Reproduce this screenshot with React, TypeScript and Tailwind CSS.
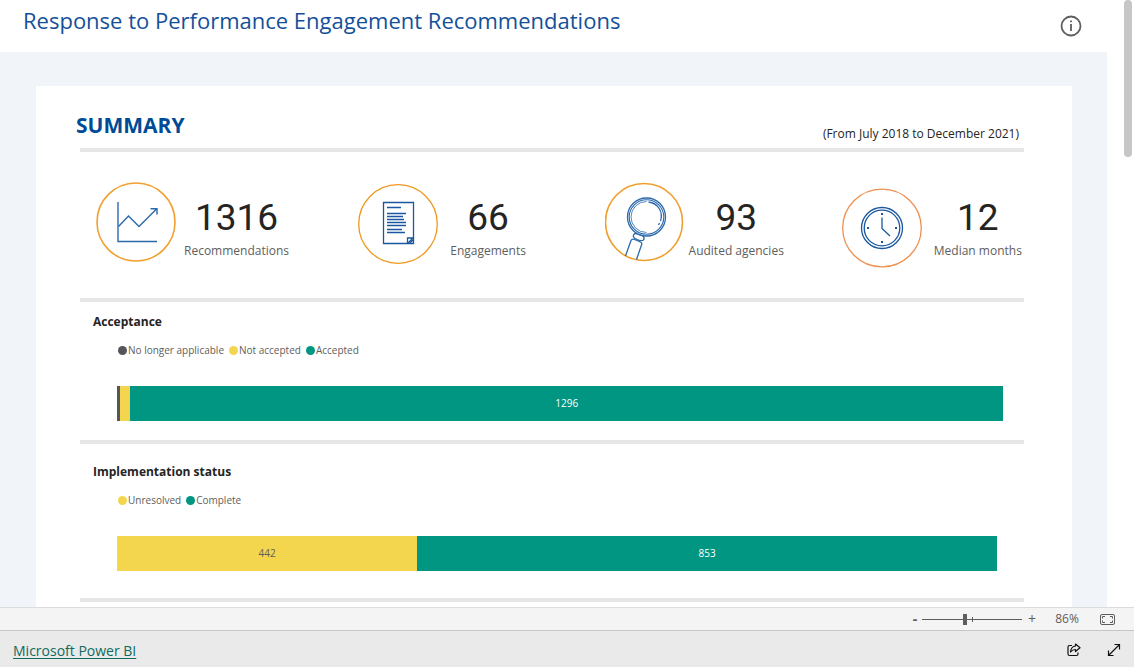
import type { ReactNode } from "react";

interface Segment {
  name: string;
  value: number;
  dot: string;
  fill: string;
  showValue?: boolean;
}

const acceptance: Segment[] = [
  { name: "No longer applicable", value: 4, dot: "bg-[#54565b]", fill: "bg-[#54565b]" },
  { name: "Not accepted", value: 16, dot: "bg-[#f3d64e]", fill: "bg-[#f3d64e]" },
  { name: "Accepted", value: 1296, dot: "bg-[#009681]", fill: "bg-[#009681] text-white", showValue: true },
];

const implementation: Segment[] = [
  { name: "Unresolved", value: 442, dot: "bg-[#f3d64e]", fill: "bg-[#f3d64e] text-[#605e5c]", showValue: true },
  { name: "Complete", value: 853, dot: "bg-[#009681]", fill: "bg-[#009681] text-white", showValue: true },
];

function TrendIcon() {
  return (
    <svg className="size-20 shrink-0" viewBox="0 0 80 80" fill="none" stroke="#2c69ac" strokeWidth="1.4">
      <circle cx="40" cy="40" r="39" stroke="#f0a030" strokeWidth="1.6" />
      <path d="M22 20V59.500H61" />
      <path d="M22.500 44.500L32.500 34L43 44.500L60.500 27M54.500 26.700H61V32.500" />
    </svg>
  );
}

function ReportIcon() {
  return (
    <svg className="mt-0.5 size-20 shrink-0" viewBox="0 0 80 80" fill="none" stroke="#1a57a0" strokeWidth="1.3">
      <circle cx="40" cy="40" r="39.300" stroke="#f0981e" />
      <path d="M25.500 18.500H55.500V59.500H25.500Z" />
      <path d="M49.500 59.500V54H55.500M49.500 59.500L55 54M52 59L55 56" />
      <path d="M29 23.500H43M29 29.500H48M29 32.500H45M29 35.500H46M29 38.500H48M29 41.500H48M29 45.500H44M29 48.500H47" />
    </svg>
  );
}

function MagnifierIcon() {
  return (
    <svg className="size-20 shrink-0" viewBox="0 0 80 80" fill="none" stroke="#2c69ac" strokeWidth="1.3">
      <circle cx="39" cy="40" r="38.500" stroke="#f0a030" strokeWidth="1.6" />
      <circle cx="41.500" cy="35" r="19" />
      <circle cx="41.500" cy="35" r="17.300" strokeWidth="1.1" />
      <path d="M43.500 20C53 21 58.500 30 55.500 39M54.500 41L53.500 43" />
      <path d="M41.500 19.500A15.500 15.500 0 0 0 41.500 50.500" strokeWidth="0.8" />
      <path d="M31 51.500L38 54Q40 56 38.500 58Q36 59.500 32 57.500Q27.500 55.500 28.500 53Q29 51.500 31 51.500Z" />
      <path d="M20.500 74L26 58.500Q27 56.500 29.500 57.500L35.500 60Q37.500 61 36.500 63L31.500 77.500" />
    </svg>
  );
}

function ClockIcon() {
  return (
    <svg className="mt-1.5 size-20 shrink-0" viewBox="0 0 80 80" fill="none" stroke="#1a57a0" strokeWidth="1.3">
      <ellipse cx="40" cy="40" rx="39.300" ry="38.800" stroke="#ee9050" />
      <circle cx="40" cy="40" r="20.500" />
      <circle cx="40" cy="40" r="17.800" />
      <path d="M40 29.500V40.500L48 48" />
      <path d="M39 26H41M39 54H41M25 40H27M53 40H55" strokeWidth="2" />
    </svg>
  );
}

function Stat({ value, label, className, children }: { value: string; label: string; className: string; children: ReactNode }) {
  return (
    <div className={`flex items-start ${className}`}>
      {children}
      <div className="mt-3 flex flex-col items-center">
        <p className="font-[Roboto] text-[37px] leading-12 text-[#252423]">{value}</p>
        <p className="text-[12px] leading-[18px] whitespace-nowrap text-[#605e5c]">{label}</p>
      </div>
    </div>
  );
}

function StackedBar({ title, segments, className }: { title: string; segments: Segment[]; className: string }) {
  return (
    <section className="pt-2.5 pl-[41px]">
      <h3 className="-ml-6 text-[12px] leading-5 font-bold text-[#252423]">{title}</h3>
      <ul className="mt-2.5 ml-px flex gap-[5px] text-[10px] leading-4 text-[#605e5c]">
        {segments.map((s) => (
          <li key={s.name} className="flex items-center gap-px">
            <span className={`size-[9px] rounded-full ${s.dot}`} />
            {s.name}
          </li>
        ))}
      </ul>
      <div className={`mt-7 flex h-[35px] ${className}`}>
        {segments.map((s) => (
          <div
            key={s.name}
            className={`flex items-center justify-center text-[10px] ${s.fill}`}
            style={{ flex: `${s.value} 1 0px` }}
          >
            {s.showValue && s.value}
          </div>
        ))}
      </div>
    </section>
  );
}

function Rule() {
  return <hr className="ml-1 h-1 border-0 bg-[#e6e6e6]" />;
}

function ZoomBar() {
  return (
    <div className="flex h-[23px] shrink-0 items-center justify-end border-t border-[#dcdcdc] bg-[#f4f4f4] pr-[19px] text-[#605e5c]">
      <button aria-label="Zoom out" className="w-[14px] text-[14px] leading-4 font-bold">-</button>
      <div className="relative flex h-4 w-[100px] items-center">
        <input
          type="range"
          aria-label="Zoom"
          min={0}
          max={100}
          defaultValue={43}
          className="h-3 w-full appearance-none bg-[linear-gradient(#605e5c,#605e5c)] bg-[length:100%_1px] bg-center bg-no-repeat [&::-webkit-slider-thumb]:h-[11px] [&::-webkit-slider-thumb]:w-1 [&::-webkit-slider-thumb]:appearance-none [&::-webkit-slider-thumb]:bg-[#605e5c]"
        />
        <span className="absolute left-1/2 h-[5px] w-px bg-[#605e5c]" />
      </div>
      <button aria-label="Zoom in" className="w-5 text-[14px] leading-4">+</button>
      <span className="w-[50px] text-center text-[12px]">86%</span>
      <button aria-label="Fit to page" className="ml-2">
        <svg className="h-[11px] w-[15px]" viewBox="0 0 15 11" fill="none" stroke="#605e5c">
          <rect x="0.500" y="0.500" width="14" height="10" rx="1.500" />
          <path d="M5 2.500H2.500V4.500M10 2.500H12.500V4.500M5 8.500H2.500V6.500M10 8.500H12.500V6.500" />
        </svg>
      </button>
    </div>
  );
}

function Footer() {
  return (
    <footer className="flex h-[37px] shrink-0 items-center justify-between border-t border-[#c6c6c6] bg-[#eaeaea] pt-0.5 pr-3 pl-[13px]">
      <a href="#" className="text-[14px] text-[#0f6b5e] underline underline-offset-2">Microsoft Power BI</a>
      <div className="flex items-center gap-6">
        <button aria-label="Share">
          <svg className="size-4" viewBox="0 0 16 16" fill="none" stroke="#111" strokeWidth="1.2" strokeLinejoin="round">
            <path d="M6 3.500H3.500Q2 3.500 2 5V12Q2 13.500 3.500 13.500H10.500Q12 13.500 12 12V10.500" />
            <path d="M9.500 2L14 5.800L9.500 9.500V7.500Q6.500 7.500 4.500 10Q5 4.500 9.500 4Z" />
          </svg>
        </button>
        <button aria-label="Full screen">
          <svg className="size-4" viewBox="0 0 16 16" fill="none" stroke="#111" strokeWidth="1.2">
            <path d="M2.500 13.500L13.500 2.500M8.500 2.500H13.500V7.500M2.500 8.500V13.500H7.500" />
          </svg>
        </button>
      </div>
    </footer>
  );
}

export default function App() {
  return (
    <div className="flex h-screen flex-col bg-white font-['Open_Sans',sans-serif]">
      <div className="flex min-h-0 flex-1 overflow-hidden">
        <main className="flex min-w-0 flex-1 flex-col">
          <header className="flex h-[52px] shrink-0 items-start justify-between pr-[25px] pl-[23px]">
            <h1 className="pt-1 text-[22px] leading-8 whitespace-nowrap text-[#13509a]">
              Response to Performance Engagement Recommendations
            </h1>
            <button aria-label="Information" className="mt-[15px]">
              <svg className="size-[22px]" viewBox="0 0 22 22" fill="none" stroke="#605e5c">
                <circle cx="11" cy="11" r="9.500" strokeWidth="1.800" />
                <path d="M11 9V16M11 5.500V7.300" strokeWidth="1.800" />
              </svg>
            </button>
          </header>
          <div className="flex-1 overflow-hidden bg-[#f1f4f9] pt-[34px] pr-[35px] pl-9">
            <article className="bg-white pt-6 pr-12 pb-10 pl-10">
              <div className="flex h-[38px] items-start justify-between pr-[5px]">
                <h2 className="text-[21px] leading-[30px] font-bold text-[#004b96]">SUMMARY</h2>
                <p className="pt-4 text-[12px] leading-4 text-[#252423]">(From July 2018 to December 2021)</p>
              </div>
              <Rule />
              <div className="grid h-[146px] grid-cols-[262fr_246fr_237fr_182fr] pt-[30px] pl-5">
                <Stat value="1316" label="Recommendations" className="gap-2">
                  <TrendIcon />
                </Stat>
                <Stat value="66" label="Engagements" className="gap-3">
                  <ReportIcon />
                </Stat>
                <Stat value="93" label="Audited agencies" className="gap-1">
                  <MagnifierIcon />
                </Stat>
                <Stat value="12" label="Median months" className="gap-3">
                  <ClockIcon />
                </Stat>
              </div>
              <Rule />
              <div className="h-[138px]">
                <StackedBar title="Acceptance" segments={acceptance} className="mr-[21px]" />
              </div>
              <Rule />
              <div className="h-[154px] pt-2">
                <StackedBar title="Implementation status" segments={implementation} className="mr-[27px]" />
              </div>
              <Rule />
            </article>
          </div>
        </main>
        <div className="flex w-[27px] shrink-0 justify-end pr-0.5">
          <div className="h-[157px] w-2 rounded-full bg-[#c6c6c6]" />
        </div>
      </div>
      <ZoomBar />
      <Footer />
    </div>
  );
}
